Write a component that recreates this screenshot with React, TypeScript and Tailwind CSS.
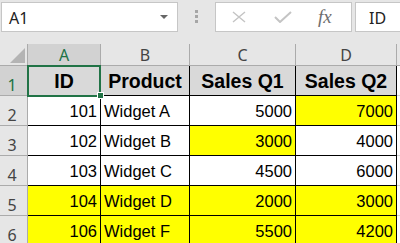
import React from "react";

type Cell = { v: string; y?: boolean; align: "l" | "r" | "c" };

const rows: Cell[][] = [
  [
    { v: "ID", align: "c" },
    { v: "Product", align: "c" },
    { v: "Sales Q1", align: "c" },
    { v: "Sales Q2", align: "c" },
  ],
  [
    { v: "101", align: "r" },
    { v: "Widget A", align: "l" },
    { v: "5000", align: "r" },
    { v: "7000", align: "r", y: true },
  ],
  [
    { v: "102", align: "r" },
    { v: "Widget B", align: "l" },
    { v: "3000", align: "r", y: true },
    { v: "4000", align: "r" },
  ],
  [
    { v: "103", align: "r" },
    { v: "Widget C", align: "l" },
    { v: "4500", align: "r" },
    { v: "6000", align: "r" },
  ],
  [
    { v: "104", align: "r", y: true },
    { v: "Widget D", align: "l", y: true },
    { v: "2000", align: "r", y: true },
    { v: "3000", align: "r", y: true },
  ],
  [
    { v: "106", align: "r", y: true },
    { v: "Widget F", align: "l", y: true },
    { v: "5500", align: "r", y: true },
    { v: "4200", align: "r", y: true },
  ],
];

const ui = { fontFamily: '"Noto Sans", "Open Sans", sans-serif' };
const arial = { fontFamily: '"Liberation Sans", Arial, sans-serif' };

export default function App() {
  return (
    <div className="w-[400px] h-[243px] overflow-hidden bg-white relative">
      {/* Top bar */}
      <div className="h-[44px] bg-[#e6e6e6] flex items-start pt-[2px]">
        <div
          className="ml-[1px] w-[177px] h-[30px] bg-white border border-[#c6c6c6] flex items-center pl-[7px] pr-[9px] text-[16px] leading-[18px] text-[#222]"
          style={ui}
        >
          <span className="mt-[1px]">A1</span>
          <span className="ml-auto w-0 h-0 border-l-[4px] border-r-[4px] border-t-[4px] border-l-transparent border-r-transparent border-t-[#666]" />
        </div>
        <div className="w-[37px] h-[30px] flex flex-col items-start pl-[17px] pt-[8px] gap-[2px]">
          <span className="w-[3px] h-[3px] bg-[#a6a6a6]" />
          <span className="w-[3px] h-[3px] bg-[#a6a6a6]" />
          <span className="w-[3px] h-[3px] bg-[#a6a6a6]" />
        </div>
        <div className="w-[137px] h-[30px] bg-white border border-[#c6c6c6] flex items-center">
          <svg className="ml-[16px]" width="14" height="12" viewBox="0 0 14 12">
            <path d="M1 1 L13 11 M13 1 L1 11" stroke="#c4c4c4" strokeWidth="1.4" fill="none" />
          </svg>
          <svg className="ml-[28px]" width="18" height="12" viewBox="0 0 18 12">
            <path d="M1 6 L6 11 L17 1" stroke="#c4c4c4" strokeWidth="2" fill="none" />
          </svg>
          <span
            className="ml-[26px] text-[19px] leading-[18px] italic text-[#6e6e6e]"
            style={{ fontFamily: '"Liberation Serif", "Times New Roman", serif' }}
          >
            fx
          </span>
        </div>
        <div
          className="ml-[3px] flex-1 h-[30px] bg-white border border-r-0 border-[#c6c6c6] flex items-center pl-[13px] text-[16px] leading-[18px] text-[#222]"
          style={ui}
        >
          <span className="mt-[1px]">ID</span>
        </div>
      </div>

      {/* Grid */}
      <div className="relative grid grid-cols-[28px_73px_89px_106px_101px_1fr] grid-rows-[22px_30px_30px_30px_30px_30px_30px]">
        {/* Header row */}
        <div className="bg-[#e6e6e6] border-r border-b border-[#ababab] relative">
          <svg className="absolute left-0 top-0" width="27" height="21" viewBox="0 0 27 21">
            <polygon points="25,4 25,19 10,19" fill="#b4b4b4" />
          </svg>
        </div>
        {["A", "B", "C", "D"].map((l, i) => (
          <div
            key={l}
            className={`flex items-center justify-center text-[16px] leading-[18px] border-r border-b ${
              i === 0
                ? "bg-[#d2d2d2] text-[#217346] border-r-[#ababab] border-b-[#217346]"
                : "bg-[#e6e6e6] text-[#444] border-[#ababab]"
            }`}
            style={ui}
          >
            {l}
          </div>
        ))}
        <div className="bg-[#e6e6e6] border-b border-[#ababab]" />

        {rows.map((r, ri) => (
          <React.Fragment key={ri}>
            <div
              className={`flex items-end justify-center pr-[3px] pb-[1px] text-[16px] leading-[18px] border-r border-b border-[#ababab] ${
                ri === 0 ? "bg-[#d2d2d2] text-[#217346]" : "bg-[#e6e6e6] text-[#444]"
              }`}
              style={ui}
            >
              {ri + 1}
            </div>
            {r.map((c, ci) => (
              <div
                key={ci}
                className={`flex items-end border-r border-b border-black whitespace-nowrap overflow-hidden text-black ${
                  ri === 0
                    ? "bg-[#d9d9d9] justify-center font-bold text-[19.5px] leading-[22px] pb-[3px]"
                    : `${c.y ? "bg-[#ffff00]" : "bg-white"} text-[16.5px] leading-[19px] pb-[4px] ${
                        c.align === "r" ? "justify-end pr-[3px]" : "justify-start pl-[3px]"
                      }`
                }`}
                style={arial}
              >
                {c.v}
              </div>
            ))}
            <div className="bg-white border-b border-[#d4d4d4]" />
          </React.Fragment>
        ))}

        {/* Selection */}
        <div className="absolute left-[27px] top-[21px] w-[74px] h-[32px] border-2 border-[#217346] pointer-events-none" />
        <div className="absolute left-[98px] top-[49px] w-[5px] h-[5px] bg-[#217346] outline outline-1 outline-white" />
      </div>
    </div>
  );
}
